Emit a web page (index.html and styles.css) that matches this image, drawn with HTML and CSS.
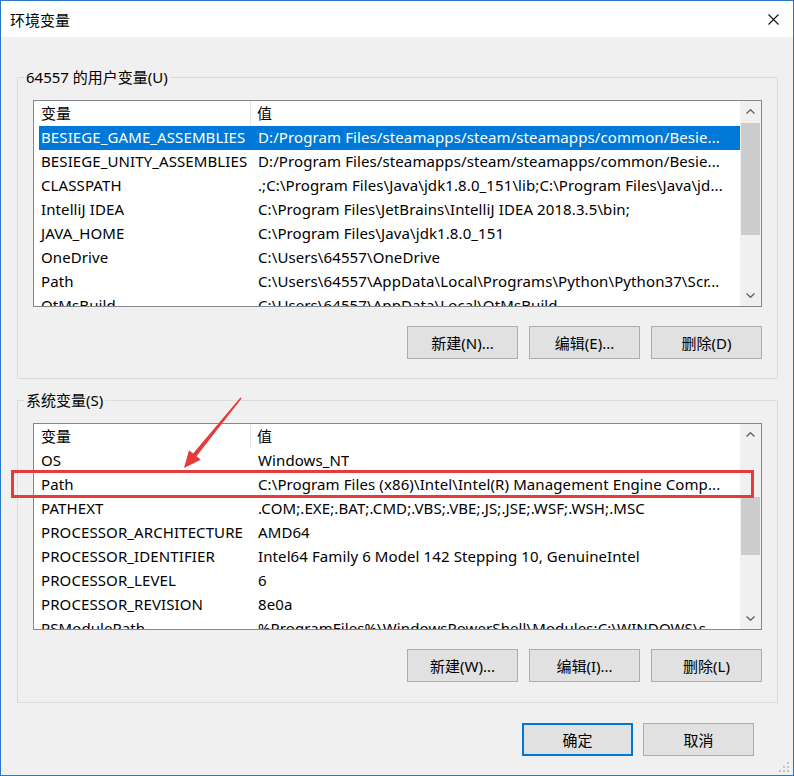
FILE: index.html
```html
<!DOCTYPE html>
<html>
<head>
<meta charset="utf-8">
<title>环境变量</title>
<link rel="stylesheet" href="styles.css">
</head>
<body>
<div class="window">
	<div class="titlebar">
		<span class="title">环境变量</span>
		<svg class="close" width="11" height="11" viewBox="0 0 11 11"><path d="M0.5 0.5L10.5 10.5M10.5 0.5L0.5 10.5" stroke="#111" stroke-width="1.1" fill="none"/></svg>
	</div>

	<div class="content">
		<fieldset class="group">
			<legend>64557 的用户变量(U)</legend>
			<div class="list">
				<div class="list-body">
					<div class="head"><span class="c1">变量</span><span class="c2">值</span></div>
					<div class="row sel"><span class="c1">BESIEGE_GAME_ASSEMBLIES</span><span class="c2">D:/Program Files/steamapps/steam/steamapps/common/Besie...</span></div>
					<div class="row"><span class="c1">BESIEGE_UNITY_ASSEMBLIES</span><span class="c2">D:/Program Files/steamapps/steam/steamapps/common/Besie...</span></div>
					<div class="row"><span class="c1">CLASSPATH</span><span class="c2">.;C:\Program Files\Java\jdk1.8.0_151\lib;C:\Program Files\Java\jd...</span></div>
					<div class="row"><span class="c1">IntelliJ IDEA</span><span class="c2">C:\Program Files\JetBrains\IntelliJ IDEA 2018.3.5\bin;</span></div>
					<div class="row"><span class="c1">JAVA_HOME</span><span class="c2">C:\Program Files\Java\jdk1.8.0_151</span></div>
					<div class="row"><span class="c1">OneDrive</span><span class="c2">C:\Users\64557\OneDrive</span></div>
					<div class="row"><span class="c1">Path</span><span class="c2">C:\Users\64557\AppData\Local\Programs\Python\Python37\Scr...</span></div>
					<div class="row"><span class="c1">QtMsBuild</span><span class="c2">C:\Users\64557\AppData\Local\QtMsBuild</span></div>
				</div>
				<div class="vscroll">
					<div class="arrow"><svg width="9" height="5" viewBox="0 0 9 5"><path d="M0.5 4.5L4.5 0.7L8.5 4.5" stroke="#606060" stroke-width="1.3" fill="none"/></svg></div>
					<div class="track"><div class="thumb" style="margin-top:1px;height:112px"></div></div>
					<div class="arrow"><svg width="9" height="5" viewBox="0 0 9 5"><path d="M0.5 0.5L4.5 4.3L8.5 0.5" stroke="#606060" stroke-width="1.3" fill="none"/></svg></div>
				</div>
			</div>
			<div class="buttons">
				<button class="btn">新建(N)...</button>
				<button class="btn">编辑(E)...</button>
				<button class="btn">删除(D)</button>
			</div>
		</fieldset>

		<fieldset class="group sys">
			<legend>系统变量(S)</legend>
			<div class="list">
				<div class="list-body">
					<div class="head"><span class="c1">变量</span><span class="c2">值</span></div>
					<div class="row"><span class="c1">OS</span><span class="c2">Windows_NT</span></div>
					<div class="row"><span class="c1">Path</span><span class="c2">C:\Program Files (x86)\Intel\Intel(R) Management Engine Comp...</span></div>
					<div class="row"><span class="c1">PATHEXT</span><span class="c2">.COM;.EXE;.BAT;.CMD;.VBS;.VBE;.JS;.JSE;.WSF;.WSH;.MSC</span></div>
					<div class="row"><span class="c1">PROCESSOR_ARCHITECTURE</span><span class="c2">AMD64</span></div>
					<div class="row"><span class="c1">PROCESSOR_IDENTIFIER</span><span class="c2">Intel64 Family 6 Model 142 Stepping 10, GenuineIntel</span></div>
					<div class="row"><span class="c1">PROCESSOR_LEVEL</span><span class="c2">6</span></div>
					<div class="row"><span class="c1">PROCESSOR_REVISION</span><span class="c2">8e0a</span></div>
					<div class="row"><span class="c1">PSModulePath</span><span class="c2">%ProgramFiles%\WindowsPowerShell\Modules;C:\WINDOWS\s...</span></div>
				</div>
				<div class="vscroll">
					<div class="arrow"><svg width="9" height="5" viewBox="0 0 9 5"><path d="M0.5 4.5L4.5 0.7L8.5 4.5" stroke="#606060" stroke-width="1.3" fill="none"/></svg></div>
					<div class="track"><div class="thumb" style="margin-top:52px;height:58px"></div></div>
					<div class="arrow"><svg width="9" height="5" viewBox="0 0 9 5"><path d="M0.5 0.5L4.5 4.3L8.5 0.5" stroke="#606060" stroke-width="1.3" fill="none"/></svg></div>
				</div>
			</div>
			<div class="buttons">
				<button class="btn">新建(W)...</button>
				<button class="btn">编辑(I)...</button>
				<button class="btn">删除(L)</button>
			</div>
		</fieldset>

		<div class="footer">
			<button class="btn default">确定</button>
			<button class="btn">取消</button>
		</div>
	</div>

	<!-- annotation drawn over the dialog -->
	<div class="mark"></div>
	<svg class="pointer" width="794" height="776" viewBox="0 0 794 776"><polygon points="241.6,398.6 196.5,456.3 200.8,459.8 184,468 189,450.2 193.1,453.6 240.4,397.4" fill="#e63b3b"/></svg>

	<svg class="grip" width="10" height="10" viewBox="0 0 10 10">
		<rect x="8" y="0" width="2" height="2" fill="#c4c4c4"/>
		<rect x="4" y="4" width="2" height="2" fill="#c4c4c4"/>
		<rect x="8" y="4" width="2" height="2" fill="#c4c4c4"/>
		<rect x="0" y="8" width="2" height="2" fill="#c4c4c4"/>
		<rect x="4" y="8" width="2" height="2" fill="#c4c4c4"/>
		<rect x="8" y="8" width="2" height="2" fill="#c4c4c4"/>
	</svg>
</div>
</body>
</html>
```

FILE: styles.css
```css
html, body {
	margin: 0;
	padding: 0;
	background: #fff;
}
body {
	font-family: "Noto Sans", "Noto Sans CJK SC", sans-serif;
	font-size: 15px;
	color: #000;
}
.window {
	position: relative;
	box-sizing: border-box;
	width: 794px;
	height: 776px;
	border: 1px solid #2a78c5;
	background: #f0f0f0;
	display: flex;
	flex-direction: column;
	overflow: hidden;
}
.titlebar {
	height: 36px;
	flex-shrink: 0;
	background: #fff;
	display: flex;
	align-items: center;
	justify-content: space-between;
	padding: 0 14px 0 9px;
}
.content {
	display: flex;
	flex-direction: column;
	padding: 30px 15px 0 16px;
}
.group {
	margin: 0;
	padding: 13px 15px 19px;
	border: 1px solid #dcdcdc;
	min-width: 0;
}
.group legend {
	margin-left: -9px;
	padding: 0 2px;
	height: 20px;
	line-height: 20px;
}
.group.sys {
	margin-top: 11px;
	padding-bottom: 20px;
}
.list {
	height: 207px;
	box-sizing: border-box;
	border: 1px solid #828790;
	background: #fff;
	display: flex;
}
.list-body {
	flex: 1;
	overflow: hidden;
	white-space: nowrap;
	letter-spacing: 0.1px;
}
.head {
	display: flex;
	height: 25px;
	line-height: 24px;
}
.head .c1 {
	width: 217px;
	flex-shrink: 0;
	box-sizing: border-box;
	padding-left: 7px;
	border-right: 1px solid #e5e5e5;
}
.head .c2 {
	padding-left: 6px;
}
.row {
	display: flex;
	height: 24px;
	line-height: 22px;
	margin-left: 5px;
}
.row .c1 {
	width: 212px;
	flex-shrink: 0;
	box-sizing: border-box;
	padding-left: 2px;
	overflow: hidden;
}
.row .c2 {
	padding-left: 7px;
	overflow: hidden;
}
.row.sel {
	background: #0078d7;
	color: #fff;
}
.vscroll {
	width: 21px;
	flex-shrink: 0;
	background: #f0f0f0;
	display: flex;
	flex-direction: column;
}
.arrow {
	height: 21px;
	display: flex;
	align-items: center;
	justify-content: center;
}
.track {
	flex: 1;
}
.thumb {
	margin: 0 1px;
	background: #cdcdcd;
}
.buttons {
	display: flex;
	justify-content: flex-end;
	gap: 11px;
	margin-top: 19px;
}
.btn {
	width: 111px;
	height: 33px;
	box-sizing: border-box;
	border: 1px solid #adadad;
	background: #e1e1e1;
	font: inherit;
	color: #000;
	padding: 0 0 1px;
}
.btn.default {
	border: 2px solid #0078d7;
}
.footer {
	display: flex;
	justify-content: flex-end;
	gap: 10px;
	margin-top: 20px;
	padding-right: 24px;
}
.mark {
	position: absolute;
	left: 10px;
	top: 469px;
	width: 743px;
	height: 28px;
	box-sizing: border-box;
	border: 3px solid #e63b3b;
}
.pointer {
	position: absolute;
	left: -1px;
	top: -1px;
	pointer-events: none;
}
.grip {
	position: absolute;
	right: 4px;
	bottom: 3px;
}
```
